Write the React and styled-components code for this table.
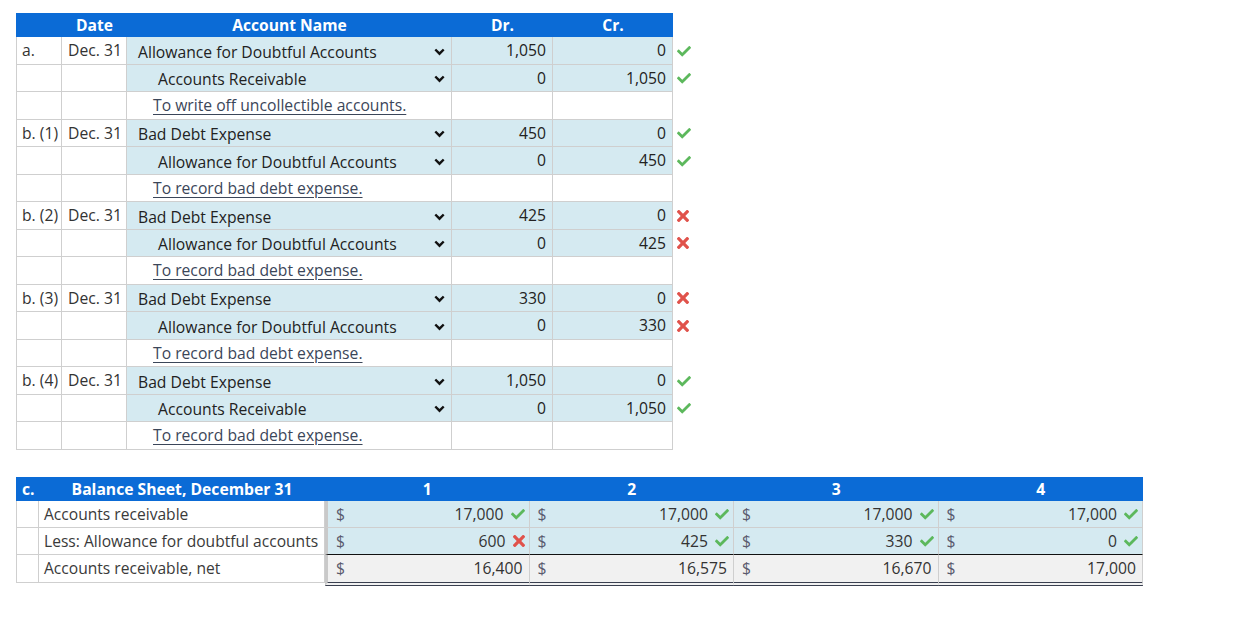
import React from 'react';
import styled, {createGlobalStyle} from 'styled-components';

const GlobalStyle = createGlobalStyle`
    html, body {
        margin: 0;
        padding: 0;
        background: #fff;
    }
    body {
        font-family: "Open Sans", "Liberation Sans", sans-serif;
        color: #222;
    }
`

const Page = styled.div`
    padding: 13px 0 0 16px;
    display: flex;
    flex-direction: column;
    gap: 27px;
`

/* journal table */

const Journal = styled.div`
    display: grid;
    grid-template-columns: 46px 65px 325px 101px 120px 22px;
    width: max-content;
`

const HeadCell = styled.div`
    background: #0b6bd6;
    color: #fff;
    font-weight: 700;
    font-size: 15.6px;
    height: 24px;
    line-height: 24px;
    text-align: center;
`

const Cell = styled.div`
    box-sizing: border-box;
    height: 27.5px;
    border-right: 1px solid #cfcfcf;
    border-bottom: 1px solid #cfcfcf;
    border-left: ${p => p.$first ? '1px solid #cfcfcf' : 'none'};
    background: ${p => p.$blue ? '#d5eaf1' : '#fff'};
    font-size: 15.7px;
    display: flex;
    align-items: center;
    white-space: nowrap;
`

const LabelCell = styled(Cell)`
    padding-left: 5px;
    color: #333;
    align-items: flex-start;
    padding-top: 2px;
`

const DateCell = styled(Cell)`
    justify-content: center;
    color: #333;
    align-items: flex-start;
    padding-top: 2px;
    padding-left: 2px;
`

const AccountCell = styled(Cell)`
    padding-left: ${p => p.$indent}px;
    padding-right: 6px;
    padding-top: ${p => p.$memo ? 0 : 3}px;
    justify-content: space-between;
`

const Memo = styled.span`
    color: #3b4659;
    text-decoration: underline;
    text-underline-offset: 3px;
    text-decoration-thickness: 1px;
`

const AmountCell = styled(Cell)`
    justify-content: flex-end;
    padding-right: 6px;
    color: #222;
`

const MarkCell = styled.div`
    height: 27.5px;
    display: flex;
    align-items: center;
    padding-left: 4px;
`

const Chevron = () => (
    <svg width="11" height="8" viewBox="0 0 11 8">
        <polyline points="1.3,1.5 5.5,5.7 9.7,1.5" fill="none" stroke="#111" strokeWidth="2.4"/>
    </svg>
)

const Check = () => (
    <svg width="14" height="12" viewBox="0 0 512 440">
        <path fill="#5cb85c" d="M173.898 411.404l-166.4-166.4c-9.997-9.997-9.997-26.206 0-36.204l36.203-36.204c9.997-9.998 26.207-9.998 36.204 0L192 284.69 432.095 44.596c9.997-9.997 26.207-9.997 36.204 0l36.203 36.204c9.997 9.997 9.997 26.206 0 36.204l-294.4 294.401c-9.998 9.997-26.207 9.997-36.204-.001z"/>
    </svg>
)

const Cross = () => (
    <svg width="12" height="12" viewBox="0 80 352 352">
        <path fill="#e0524b" d="M242.72 256l100.07-100.07c12.28-12.28 12.28-32.19 0-44.48l-22.24-22.24c-12.28-12.28-32.19-12.28-44.48 0L176 189.28 75.930 89.21c-12.28-12.28-32.19-12.28-44.48 0L9.21 111.45c-12.28 12.28-12.28 32.19 0 44.48L109.28 256 9.21 356.07c-12.28 12.28-12.28 32.19 0 44.480l22.24 22.24c12.28 12.28 32.2 12.28 44.48 0L176 322.72l100.07 100.07c12.28 12.28 32.2 12.28 44.48 0l22.24-22.24c12.28-12.28 12.28-32.19 0-44.48L242.72 256z"/>
    </svg>
)

const Mark = ({ok}) => ok ? <Check/> : <Cross/>

const entries = [
    {label: 'a.', memo: 'To write off uncollectible accounts.', lines: [
        {acc: 'Allowance for Doubtful Accounts', dr: '1,050', cr: '0', ok: true},
        {acc: 'Accounts Receivable', dr: '0', cr: '1,050', ok: true},
    ]},
    {label: 'b. (1)', memo: 'To record bad debt expense.', lines: [
        {acc: 'Bad Debt Expense', dr: '450', cr: '0', ok: true},
        {acc: 'Allowance for Doubtful Accounts', dr: '0', cr: '450', ok: true},
    ]},
    {label: 'b. (2)', memo: 'To record bad debt expense.', lines: [
        {acc: 'Bad Debt Expense', dr: '425', cr: '0', ok: false},
        {acc: 'Allowance for Doubtful Accounts', dr: '0', cr: '425', ok: false},
    ]},
    {label: 'b. (3)', memo: 'To record bad debt expense.', lines: [
        {acc: 'Bad Debt Expense', dr: '330', cr: '0', ok: false},
        {acc: 'Allowance for Doubtful Accounts', dr: '0', cr: '330', ok: false},
    ]},
    {label: 'b. (4)', memo: 'To record bad debt expense.', lines: [
        {acc: 'Bad Debt Expense', dr: '1,050', cr: '0', ok: true},
        {acc: 'Accounts Receivable', dr: '0', cr: '1,050', ok: true},
    ]},
]

function JournalTable() {
    return (
        <Journal>
            <HeadCell/>
            <HeadCell>Date</HeadCell>
            <HeadCell>Account Name</HeadCell>
            <HeadCell>Dr.</HeadCell>
            <HeadCell>Cr.</HeadCell>
            <div/>
            {entries.map((e, i) => (
                <React.Fragment key={i}>
                    {e.lines.map((l, j) => (
                        <React.Fragment key={j}>
                            <LabelCell $first>{j === 0 ? e.label : ''}</LabelCell>
                            <DateCell>{j === 0 ? 'Dec. 31' : ''}</DateCell>
                            <AccountCell $blue $indent={j === 0 ? 11 : 31}>
                                <span>{l.acc}</span>
                                <Chevron/>
                            </AccountCell>
                            <AmountCell $blue>{l.dr}</AmountCell>
                            <AmountCell $blue>{l.cr}</AmountCell>
                            <MarkCell><Mark ok={l.ok}/></MarkCell>
                        </React.Fragment>
                    ))}
                    <LabelCell $first/>
                    <DateCell/>
                    <AccountCell $indent={26} $memo><Memo>{e.memo}</Memo></AccountCell>
                    <AmountCell/>
                    <AmountCell/>
                    <div/>
                </React.Fragment>
            ))}
        </Journal>
    )
}

/* balance sheet */

const Sheet = styled.div`
    display: grid;
    grid-template-columns: 23px 286px repeat(4, 1fr);
    width: 1127px;
`

const SheetHead = styled.div`
    background: #0b6bd6;
    color: #fff;
    font-weight: 700;
    font-size: 15.7px;
    height: 24px;
    line-height: 24px;
    text-align: ${p => p.$align || 'center'};
    padding-left: ${p => p.$align === 'left' ? '6px' : '0'};
`

const SheetCell = styled.div`
    box-sizing: border-box;
    height: ${p => p.$h || 27}px;
    border-bottom: 1px solid #cfcfcf;
    border-right: 1px solid #cfcfcf;
    border-left: ${p => p.$first ? '1px solid #cfcfcf' : 'none'};
    background: #fff;
    font-size: 15.6px;
    color: #3a3a3a;
    padding-left: 5px;
    display: flex;
    align-items: center;
    white-space: nowrap;
`

const ValueCell = styled.div`
    box-sizing: border-box;
    height: ${p => p.$h || 27}px;
    background: ${p => p.$net ? '#f1f1f1' : '#d5eaf1'};
    border-right: 1px solid #cfcfcf;
    border-left: ${p => p.$lead ? '3px solid #c9c9c9' : 'none'};
    border-bottom: ${p => p.$net ? '4px double #3a4050' : p.$above ? '1px solid #111' : '1px solid #cfcfcf'};
    display: flex;
    align-items: center;
    padding: 0 4px 0 8px;
    font-size: 15.7px;
    color: #333;
`

const Dollar = styled.span`
    color: #5a5a6e;
    margin-right: auto;
`

const Amount = styled.span`
    margin-right: ${p => p.$noMark ? '2px' : '7px'};
`

const sheetCols = [
    {ar: '17,000', arOk: true, al: '600', alOk: false, net: '16,400'},
    {ar: '17,000', arOk: true, al: '425', alOk: true, net: '16,575'},
    {ar: '17,000', arOk: true, al: '330', alOk: true, net: '16,670'},
    {ar: '17,000', arOk: true, al: '0', alOk: true, net: '17,000'},
]

function BalanceSheet() {
    return (
        <Sheet>
            <SheetHead $align="left">c.</SheetHead>
            <SheetHead>Balance Sheet, December 31</SheetHead>
            {sheetCols.map((c, i) => <SheetHead key={i}>{i + 1}</SheetHead>)}

            <SheetCell $first/>
            <SheetCell>Accounts receivable</SheetCell>
            {sheetCols.map((c, i) => (
                <ValueCell key={i} $lead={i === 0}>
                    <Dollar>$</Dollar>
                    <Amount>{c.ar}</Amount>
                    <Mark ok={c.arOk}/>
                </ValueCell>
            ))}

            <SheetCell $first/>
            <SheetCell>Less: Allowance for doubtful accounts</SheetCell>
            {sheetCols.map((c, i) => (
                <ValueCell key={i} $lead={i === 0} $above>
                    <Dollar>$</Dollar>
                    <Amount>{c.al}</Amount>
                    <Mark ok={c.alOk}/>
                </ValueCell>
            ))}

            <SheetCell $first $h={28}/>
            <SheetCell $h={28}>Accounts receivable, net</SheetCell>
            {sheetCols.map((c, i) => (
                <ValueCell key={i} $lead={i === 0} $net $h={31}>
                    <Dollar>$</Dollar>
                    <Amount $noMark>{c.net}</Amount>
                </ValueCell>
            ))}
        </Sheet>
    )
}

function App() {
    return (
        <>
            <GlobalStyle/>
            <Page>
                <JournalTable/>
                <BalanceSheet/>
            </Page>
        </>
    )
}

export default App;
